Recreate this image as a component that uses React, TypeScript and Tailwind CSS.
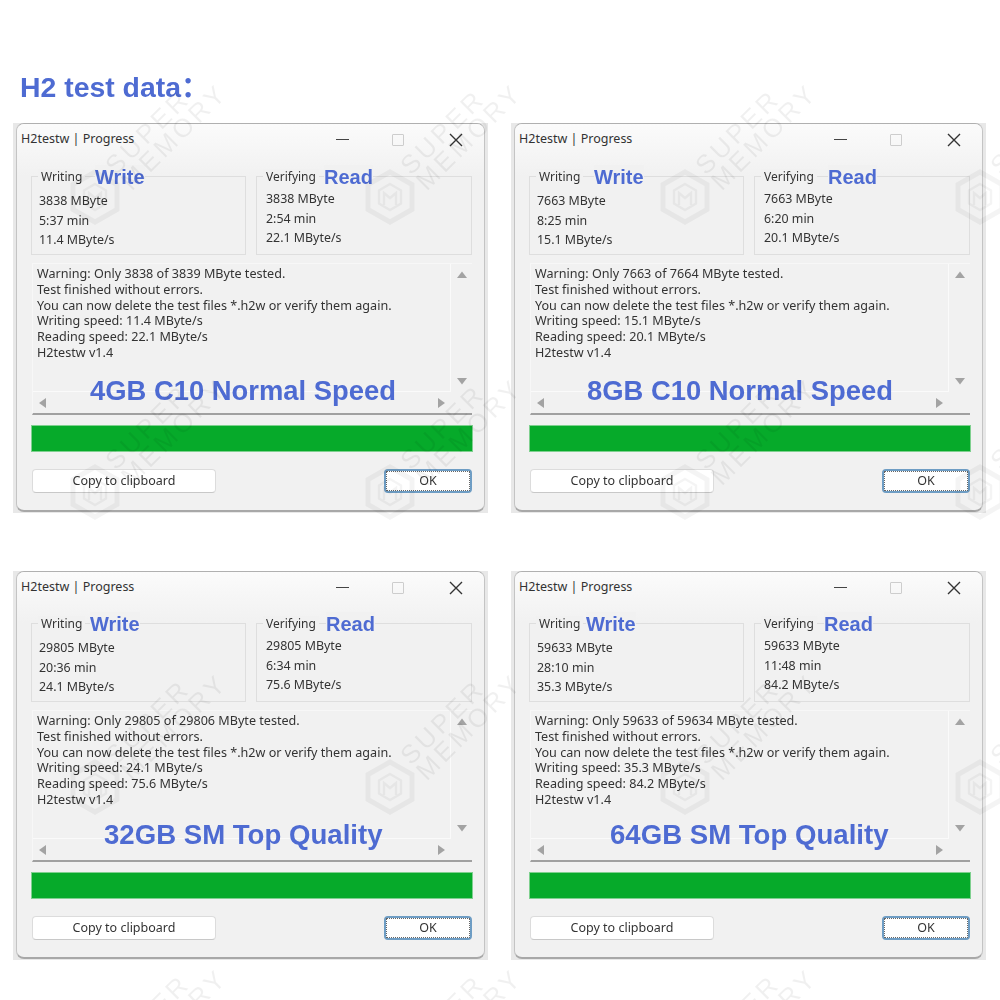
const sans = "font-['Noto_Sans',sans-serif]";
const blue = "text-[#4e6bd2]";

type Win = {
  written: string;
  total: string;
  writeTime: string;
  readTime: string;
  writeSpeed: string;
  readSpeed: string;
  label: string;
  labelLeft: number;
  labelTop: number;
  labelSize: string;
  writeLeft: number;
  readLeft: number;
  titleH: number;
};

const windows: Win[] = [
  { written: "3838", total: "3839", writeTime: "5:37", readTime: "2:54", writeSpeed: "11.4", readSpeed: "22.1", label: "4GB C10 Normal Speed", labelLeft: 58, labelTop: 110, labelSize: "text-[27.4px]", writeLeft: 63, readLeft: 67, titleH: 53 },
  { written: "7663", total: "7664", writeTime: "8:25", readTime: "6:20", writeSpeed: "15.1", readSpeed: "20.1", label: "8GB C10 Normal Speed", labelLeft: 57, labelTop: 110, labelSize: "text-[27.4px]", writeLeft: 64, readLeft: 73, titleH: 53 },
  { written: "29805", total: "29806", writeTime: "20:36", readTime: "6:34", writeSpeed: "24.1", readSpeed: "75.6", label: "32GB SM Top Quality", labelLeft: 72, labelTop: 107, labelSize: "text-[27.6px]", writeLeft: 58, readLeft: 69, titleH: 52 },
  { written: "59633", total: "59634", writeTime: "28:10", readTime: "11:48", writeSpeed: "35.3", readSpeed: "84.2", label: "64GB SM Top Quality", labelLeft: 80, labelTop: 107, labelSize: "text-[27.6px]", writeLeft: 56, readLeft: 69, titleH: 52 },
];

// watermark grid, repeats over the whole picture
const markX = [170, 465, 760, 1055];
const markY = [135, 430, 725, 1020];

function Watermark({ x, y }: { x: number; y: number }) {
  return (
    <>
      <div
        className="absolute w-[140px] -translate-x-1/2 -translate-y-1/2 -rotate-45 text-left font-['Liberation_Sans',sans-serif] text-[26px] leading-[22px] tracking-[3.5px] text-black/[0.06]"
        style={{ left: x - 3, top: y - 7 }}
      >
        SUPER
        <br />
        MEMORY
      </div>
      <svg
        className="absolute"
        style={{ left: x - 103, top: y + 34 }}
        width="56"
        height="56"
        viewBox="0 0 56 56"
        fill="none"
        stroke="#000"
        strokeOpacity="0.045"
      >
        <path d="M28 3 50 15.5 50 40.5 28 53 6 40.5 6 15.5Z" strokeWidth="5" />
        <path d="M28 15 39 21.5 39 34.5 28 41 17 34.5 17 21.5Z" strokeWidth="2.5" />
        <path d="M22 36V24L28 29 34 24V36" strokeWidth="2.5" />
      </svg>
    </>
  );
}

function GroupBox({
  legend,
  tag,
  tagLeft,
  lines,
  top,
  left,
}: {
  legend: string;
  tag: string;
  tagLeft: number;
  lines: string[];
  top: string;
  left: string;
}) {
  return (
    <div className={`relative h-[79px] border border-[#dedede] ${top} ${left}`}>
      <span className="absolute -top-[8px] left-[6px] bg-[#f1f1f1] px-[3px] text-[12px] leading-[16px] text-[#333]">
        {legend}
      </span>
      <span
        className={`absolute -top-[12px] bg-[#f1f1f1] font-['Liberation_Sans',sans-serif] text-[20px] leading-[24px] font-bold ${blue}`}
        style={{ left: tagLeft }}
      >
        {tag}
      </span>
      {lines.map((line) => (
        <div key={line} className="h-[19.5px] text-[12.4px] leading-[19.5px] text-[#333]">
          {line}
        </div>
      ))}
    </div>
  );
}

function Arrow({ d }: { d: string }) {
  return (
    <svg width="10" height="10" viewBox="0 0 10 10">
      <path d={d} fill="#a3a3a3" />
    </svg>
  );
}

function ProgressWindow({ win }: { win: Win }) {
  return (
    <div className="bg-[#e8e8e8] px-[3px] pb-[1px]">
      <div className={`${sans} overflow-hidden rounded-lg border border-[#c4c4c4] border-t-[#b0b0b0] border-b-[2px] border-b-[#a8a8a8] bg-[#f1f1f1]`}>
        <div className="bg-gradient-to-b from-[#fbfbfb] to-[#f1f1f1]" style={{ height: win.titleH - 1 }}>
          <div className="flex h-[31px] items-center justify-between pl-[4px]">
            <span className="text-[12.5px] text-[#333]">H2testw | Progress</span>
            <div className="flex">
              <div className="flex w-[52px] items-center justify-center">
                <div className="h-[1.5px] w-[13px] bg-[#444]" />
              </div>
              <div className="flex w-[60px] items-center justify-center">
                <div className="h-[12px] w-[12px] rounded-[1px] border border-[#cdcdcd]" />
              </div>
              <div className="flex w-[56px] items-center justify-center">
                <svg width="14" height="14" viewBox="0 0 14 14" stroke="#333" strokeWidth="1.4">
                  <path d="M1 1 13 13M13 1 1 13" />
                </svg>
              </div>
            </div>
          </div>
        </div>

        <div className="pr-[12px] pl-[14px]">
          <div className="grid grid-cols-[215px_216px] gap-[10px]">
            <GroupBox
              legend="Writing"
              tag="Write"
              tagLeft={win.writeLeft}
              top="pt-[14px]"
              left="pl-[7px]"
              lines={[`${win.written} MByte`, `${win.writeTime} min`, `${win.writeSpeed} MByte/s`]}
            />
            <GroupBox
              legend="Verifying"
              tag="Read"
              tagLeft={win.readLeft}
              top="pt-[12px]"
              left="pl-[9px]"
              lines={[`${win.written} MByte`, `${win.readTime} min`, `${win.readSpeed} MByte/s`]}
            />
          </div>

          <div className="relative mt-[8px] ml-[1px] flex h-[152px] flex-col border-t border-l border-[#f7f7f7] border-b-[2px] border-b-[#a0a0a0]">
            <div className="flex h-[128px]">
              <div className="flex-1 border-r border-b border-[#fafafa] pt-[2px] pl-[4px] text-[12.6px] leading-[15.8px] text-[#333]">
                <div>{`Warning: Only ${win.written} of ${win.total} MByte tested.`}</div>
                <div>Test finished without errors.</div>
                <div>You can now delete the test files *.h2w or verify them again.</div>
                <div>{`Writing speed: ${win.writeSpeed} MByte/s`}</div>
                <div>{`Reading speed: ${win.readSpeed} MByte/s`}</div>
                <div>H2testw v1.4</div>
              </div>
              <div className="flex w-[21px] flex-col items-center justify-between pt-[6px] pb-[6px]">
                <Arrow d="M5 1.5 10 8H0Z" />
                <Arrow d="M5 8.5 0 2H10Z" />
              </div>
            </div>
            <div className="flex flex-1 items-center justify-between pr-[26px] pl-[5px]">
              <Arrow d="M1 5 8 0V10Z" />
              <Arrow d="M9 5 2 0V10Z" />
            </div>
            <span
              className={`absolute font-['Liberation_Sans',sans-serif] leading-[34px] font-bold whitespace-nowrap ${win.labelSize} ${blue}`}
              style={{ left: win.labelLeft - 1, top: win.labelTop }}
            >
              {win.label}
            </span>
          </div>

          <div className="mt-[10px] -mr-[1px] h-[27px] border border-[#7fd08f] bg-[#06aa2a]" />

          <div className="mt-[17px] flex justify-between pl-[1px] text-[12.5px] text-[#333]">
            <button className="flex h-[24px] w-[184px] items-center justify-center rounded-[4px] border border-[#dcdcdc] border-b-[#c8c8c8] bg-white">
              Copy to clipboard
            </button>
            <button className="h-[24px] w-[88px] rounded-[4px] border-[2px] border-[#6e9dc4] bg-white">
              <div className="flex h-full w-full items-center justify-center border border-dotted border-[#666]">OK</div>
            </button>
          </div>
          <div className="h-[17px]" />
        </div>
      </div>
    </div>
  );
}

export default function App() {
  return (
    <div className="relative h-[1000px] w-[1000px] overflow-hidden bg-white pl-[13px]">
      <div className="blur-[0.35px]">
        <h1 className="flex h-[123px] items-end pb-[18px] pl-[7px] font-['Liberation_Sans','Noto_Sans_CJK_SC',sans-serif] text-[28.4px] leading-[36px] font-bold text-[#4e6bd2]">
          H2 test data：
        </h1>
        <div className="grid w-[975px] grid-cols-[475px_475px] gap-x-[23px] gap-y-[58px]">
          {windows.map((win) => (
            <ProgressWindow key={win.label} win={win} />
          ))}
        </div>
      </div>
      <div className="pointer-events-none absolute inset-0">
        {markY.map((y) => markX.map((x) => <Watermark key={`${x}-${y}`} x={x} y={y} />))}
      </div>
    </div>
  );
}
